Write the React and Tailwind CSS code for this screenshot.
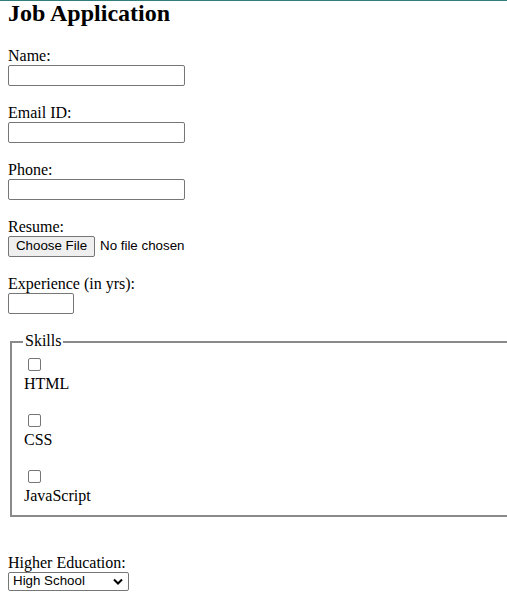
export default function App() {
  const skills = ["HTML", "CSS", "JavaScript"];

  return (
    <div className="relative w-[507px] h-[602px] overflow-hidden bg-white text-black font-['Liberation_Serif',serif] text-[16px]">
      <div className="absolute top-0 left-0 right-0 h-px bg-[#2f7f7f]" />
      <div className="px-2">
        <h2 className="m-0 mb-[19px] text-[24px] font-bold leading-[27.5px]">Job Application</h2>

        <div className="flex flex-col">
          <label className="h-[18px] leading-[18px]">Name:</label>
          <input type="text" className="block w-[177px] h-[21px] border border-[#767676] rounded-[2px] bg-white" />
        </div>

        <div className="flex flex-col mt-[18px]">
          <label className="h-[18px] leading-[18px]">Email ID:</label>
          <input type="email" className="block w-[177px] h-[21px] border border-[#767676] rounded-[2px] bg-white" />
        </div>

        <div className="flex flex-col mt-[18px]">
          <label className="h-[18px] leading-[18px]">Phone:</label>
          <input type="tel" className="block w-[177px] h-[21px] border border-[#767676] rounded-[2px] bg-white" />
        </div>

        <div className="flex flex-col mt-[18px]">
          <label className="h-[18px] leading-[18px]">Resume:</label>
          <div className="flex items-center h-[21px] font-['Liberation_Sans',Arial,sans-serif] text-[13.33px]">
            <span className="flex items-center justify-center w-[87px] h-[21px] bg-[#efefef] border border-[#767676] rounded-[2px] text-black">
              Choose File
            </span>
            <span className="ml-[5px]">No file chosen</span>
          </div>
        </div>

        <div className="flex flex-col mt-[18px]">
          <label className="h-[18px] leading-[18px]">Experience (in yrs):</label>
          <input type="number" className="block w-[66px] h-[21px] border border-[#767676] rounded-[2px] bg-white" />
        </div>

        <div className="relative mt-[18px] ml-[2px] w-[540px] pt-[9px]">
          <div className="border-2 border-[#8a8a8a] pt-[12px] pb-[10px] px-[12px]">
            {skills.map((s, i) => (
              <div key={s} className={i > 0 ? "mt-[18px]" : ""}>
                <div className="h-[20px] pt-[3px] pl-[4px]">
                  <span className="block w-[13px] h-[13px] border border-[#767676] rounded-[2px] bg-white" />
                </div>
                <div className="h-[18px] leading-[18px]">{s}</div>
              </div>
            ))}
          </div>
          <span className="absolute top-0 left-[13px] px-[2px] h-[18px] leading-[18px] bg-white">Skills</span>
        </div>

        <div className="flex flex-col mt-[37px]">
          <label className="h-[18px] leading-[18px]">Higher Education:</label>
          <div className="flex items-center justify-between w-[121px] h-[19px] border border-[#767676] rounded-[2px] bg-white pl-[4px] pr-[5px] font-['Liberation_Sans',Arial,sans-serif] text-[13.33px]">
            <span>High School</span>
            <svg width="10" height="7" viewBox="0 0 10 7" fill="none">
              <path d="M1 1.5 L5 5.5 L9 1.5" stroke="#000" strokeWidth="2" />
            </svg>
          </div>
        </div>
      </div>
    </div>
  );
}
